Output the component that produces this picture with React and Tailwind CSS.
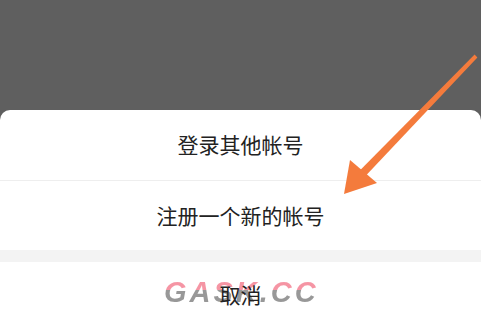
export default function App() {
  return (
    <div className="relative w-[481px] h-[314px] overflow-hidden bg-[#5f5f5f] font-['Noto_Sans_CJK_SC','Noto_Sans',sans-serif]">
      <div className="h-[110px]" />
      <div className="bg-white rounded-t-[10px] text-[#222] text-[21px]">
        <div className="h-[70px] flex items-center justify-center">登录其他帐号</div>
        <div className="h-px bg-[#eeeeee]" />
        <div className="h-[69px] flex items-center justify-center">注册一个新的帐号</div>
        <div className="h-[12px] bg-[#f3f3f3]" />
        <div className="relative h-[66px] flex items-center justify-center">
          {/* watermark */}
          <span className="absolute left-[164px] top-[16px] text-[29px] leading-none font-bold italic tracking-[3px] text-transparent bg-clip-text bg-[linear-gradient(180deg,#f58a9b_0%,#f58a9b_42%,#8d8d8d_42%,#8d8d8d_100%)] font-['Liberation_Sans',sans-serif] opacity-90">
            GASK.CC
          </span>
          <span className="relative">取消</span>
        </div>
      </div>

      {/* arrow */}
      <svg className="absolute inset-0" width="481" height="314" viewBox="0 0 481 314">
        <polygon
          points="477.4,57.4 474.6,54.6 357.1,173.2 362.9,178.8"
          fill="#f47b3c"
        />
        <polygon points="344,194 350,160 377,183" fill="#f47b3c" />
      </svg>
    </div>
  );
}
